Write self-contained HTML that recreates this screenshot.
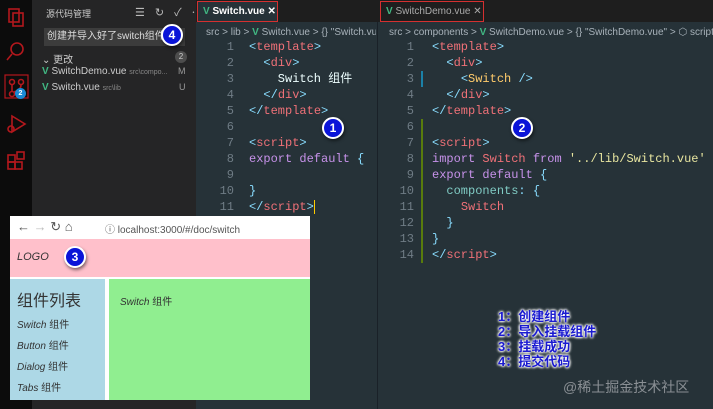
<!DOCTYPE html>
<html><head><meta charset="utf-8"><style>
*{margin:0;padding:0;box-sizing:border-box}
body{width:713px;height:409px;overflow:hidden;background:#263238;font-family:"Liberation Sans","Noto Sans CJK SC",sans-serif;position:relative}
.abs{position:absolute}
.act{left:0;top:0;width:32px;height:409px;background:#0c0c0c}
.side{left:32px;top:0;width:164px;height:409px;background:#252526;color:#ccc;font-size:10px}
.tabbar{left:196px;top:0;width:517px;height:22px;background:#1e1e1e}
.ed{top:22px;height:387px;background:#263238}
.code{font-family:"Liberation Mono","Noto Sans CJK SC",monospace;font-size:12px;line-height:16px;white-space:pre;color:#eeffff}
.ln{font-family:"Liberation Mono",monospace;font-size:12px;line-height:16px;color:#6f7c85;text-align:right;white-space:pre}
.t{color:#f07178}.b{color:#89ddff}.k{color:#c792ea}.y{color:#ffcb6b}.s{color:#e8e6a0}.c{color:#80cbc4}
.bc{font-size:10px;color:#a8b2ba;white-space:nowrap}
.circ{width:22px;height:22px;border-radius:50%;background:#0a14d8;border:2px solid #fff;color:#fff;font-weight:bold;font-size:12px;text-align:center;line-height:18px;box-shadow:1px 2px 3px rgba(0,0,0,.5)}
.tab{height:21px;border:1px solid #d43030;color:#ddd;font-size:10px;line-height:19px;padding-left:5px;white-space:nowrap;overflow:hidden}
.v{color:#41b883;font-weight:bold}
</style></head><body>
<div class="abs act">
<svg width="32" height="200" class="abs" style="left:0;top:0" fill="none" stroke="#b3181d" stroke-width="1.6">
<rect x="9" y="9" width="10" height="13"/><rect x="13" y="13" width="10" height="13"/>
<circle cx="17" cy="49" r="6"/><line x1="12" y1="54" x2="7" y2="60"/>
<rect x="5" y="75" width="23" height="23" stroke-width="1.2"/><circle cx="12" cy="82" r="2.5"/><circle cx="21" cy="82" r="2.5"/><circle cx="12" cy="94" r="2.5"/><line x1="12" y1="85" x2="12" y2="91"/><path d="M21 85 Q21 90 14 92"/>
<path d="M12 116 L25 124 L12 132 Z"/><circle cx="11" cy="129" r="3"/>
<rect x="8" y="155" width="7" height="7"/><rect x="8" y="162" width="7" height="7"/><rect x="15" y="162" width="7" height="7"/><rect x="17" y="152" width="7" height="7"/>
</svg>
<div class="abs" style="left:15px;top:88px;width:11px;height:11px;border-radius:50%;background:#1a8ad4;color:#fff;font-size:7px;text-align:center;line-height:11px;font-weight:bold">2</div>
</div>
<div class="abs side">
<div class="abs" style="left:14px;top:7px;font-size:9px">源代码管理</div>
<div class="abs" style="left:103px;top:4px;font-size:11px;letter-spacing:10px;color:#bbb;white-space:nowrap">☰↻✓⋯</div>
<div class="abs" style="left:12px;top:28px;width:141px;height:18px;background:#3c3c3c;font-size:10px;line-height:18px;padding-left:3px;color:#ddd;white-space:nowrap">创建并导入好了switch组件</div>
<div class="abs circ" style="left:129px;top:24px">4</div>
<div class="abs" style="left:10px;top:51px">⌄ 更改</div>
<div class="abs" style="left:143px;top:51px;width:12px;height:12px;border-radius:50%;background:#4d4d4d;font-size:8px;text-align:center;line-height:12px">2</div>
<div class="abs" style="left:10px;top:66px;white-space:nowrap"><span class="v">V</span> SwitchDemo.vue <span style="font-size:7px;color:#888">src\compo...</span></div>
<div class="abs" style="left:146px;top:66px;color:#999;font-size:9px">M</div>
<div class="abs" style="left:10px;top:82px;white-space:nowrap"><span class="v">V</span> Switch.vue <span style="font-size:7px;color:#888">src\lib</span></div>
<div class="abs" style="left:147px;top:82px;color:#999;font-size:9px">U</div>
</div>
<div class="abs tabbar">
<div class="abs tab" style="left:1px;top:1px;width:81px;background:#263238;color:#fff;font-weight:bold"><span class="v">V</span> Switch.vue ✕</div>
<div class="abs tab" style="left:184px;top:1px;width:104px;color:#aaa"><span class="v">V</span> SwitchDemo.vue ✕</div>
</div>
<div class="abs ed" style="left:196px;width:182px;border-right:1px solid #1a2128">
<div class="abs bc" style="left:10px;top:5px;width:170px;overflow:hidden">src &gt; lib &gt; <span class="v">V</span> Switch.vue &gt; {} "Switch.vue</div>
<div class="abs ln" style="left:10px;top:17px;width:28px">1
2
3
4
5
6
7
8
9
10
11</div>
<div class="abs code" style="left:53px;top:17px"><span class="b">&lt;</span><span class="t">template</span><span class="b">&gt;</span>
  <span class="b">&lt;</span><span class="t">div</span><span class="b">&gt;</span>
    Switch 组件
  <span class="b">&lt;/</span><span class="t">div</span><span class="b">&gt;</span>
<span class="b">&lt;/</span><span class="t">template</span><span class="b">&gt;</span>

<span class="b">&lt;</span><span class="t">script</span><span class="b">&gt;</span>
<span class="k">export default</span> <span class="b">{</span>

<span class="b">}</span>
<span class="b">&lt;/</span><span class="t">script</span><span class="b">&gt;</span><span style="border-left:1px solid #ffcc00"></span></div>
<div class="abs circ" style="left:126px;top:95px">1</div>
</div>
<div class="abs ed" style="left:379px;width:334px">
<div class="abs bc" style="left:10px;top:5px">src &gt; components &gt; <span class="v">V</span> SwitchDemo.vue &gt; {} "SwitchDemo.vue" &gt; ⬡ script</div>
<div class="abs ln" style="left:5px;top:17px;width:30px">1
2
3
4
5
6
7
8
9
10
11
12
13
14</div>
<div class="abs" style="left:42px;top:97px;width:2px;height:144px;background:#587c0c"></div>
<div class="abs" style="left:42px;top:49px;width:2px;height:16px;background:#1b81a8"></div>
<div class="abs code" style="left:53px;top:17px"><span class="b">&lt;</span><span class="t">template</span><span class="b">&gt;</span>
  <span class="b">&lt;</span><span class="t">div</span><span class="b">&gt;</span>
    <span class="b">&lt;</span><span class="y">Switch</span> <span class="b">/&gt;</span>
  <span class="b">&lt;/</span><span class="t">div</span><span class="b">&gt;</span>
<span class="b">&lt;/</span><span class="t">template</span><span class="b">&gt;</span>

<span class="b">&lt;</span><span class="t">script</span><span class="b">&gt;</span>
<span class="k">import</span> <span class="t">Switch</span> <span class="k">from</span> <span class="s">'../lib/Switch.vue'</span>
<span class="k">export default</span> <span class="b">{</span>
  <span class="c">components</span><span class="b">: {</span>
    <span class="t">Switch</span>
  <span class="b">}</span>
<span class="b">}</span>
<span class="b">&lt;/</span><span class="t">script</span><span class="b">&gt;</span></div>
<div class="abs circ" style="left:132px;top:95px">2</div>
</div>
<div class="abs" style="left:10px;top:216px;width:300px;height:184px;background:#fff">
<div class="abs" style="left:0;top:0;width:300px;height:23px;background:#fff;font-size:11px;color:#555">
<span class="abs" style="left:7px;top:3px;font-size:13px;white-space:nowrap">← <span style="color:#bbb">→</span> ↻ ⌂</span>
<span class="abs" style="left:95px;top:5px;font-size:10px;white-space:nowrap">ⓘ localhost:3000/#/doc/switch</span>
</div>
<div class="abs" style="left:0;top:23px;width:300px;height:38px;background:#ffc0cb"><span class="abs" style="left:7px;top:12px;font-size:11px;font-style:italic;color:#333">LOGO</span></div>
<div class="abs circ" style="left:54px;top:30px">3</div>
<div class="abs" style="left:0;top:63px;width:95px;height:121px;background:#add8e6;color:#333;font-size:10px">
<div class="abs" style="left:7px;top:8px;font-size:16px">组件列表</div>
<div class="abs" style="left:7px;top:37px"><i>Switch</i> 组件</div>
<div class="abs" style="left:7px;top:58px"><i>Button</i> 组件</div>
<div class="abs" style="left:7px;top:79px"><i>Dialog</i> 组件</div>
<div class="abs" style="left:7px;top:100px"><i>Tabs</i> 组件</div>
</div>
<div class="abs" style="left:99px;top:63px;width:201px;height:121px;background:#90ee90;color:#333;font-size:10px"><div class="abs" style="left:11px;top:14px"><i>Switch</i> 组件</div></div>
</div>
<div class="abs" style="left:498px;top:309px;font-size:13px;line-height:15px;color:#1a1ad0;font-weight:bold;white-space:nowrap;text-shadow:0 0 2px #fff,0 0 2px #fff,0 0 3px #fff,0 0 3px #fff">1：创建组件<br>2：导入挂载组件<br>3：挂载成功<br>4：提交代码</div>
<div class="abs" style="left:563px;top:377px;font-size:14px;color:#8a8f94;white-space:nowrap">@稀土掘金技术社区</div>
</body></html>
